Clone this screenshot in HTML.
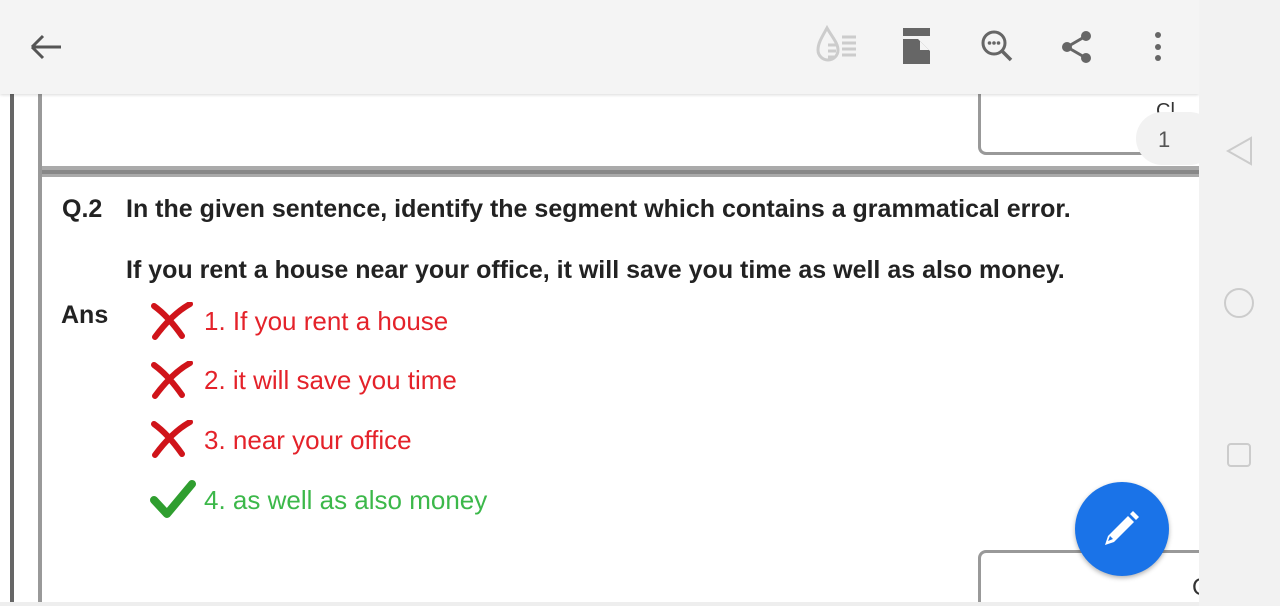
<!DOCTYPE html>
<html style="overflow:hidden"><head><style>
html,body{margin:0;width:1280px;height:606px;overflow:hidden}
body{background:#fff;font-family:"Liberation Sans",Arial,sans-serif;position:relative}
.abs{position:absolute}
.opt{position:absolute;left:204px;font-size:26px;line-height:26px}
.r{color:#e4222a}.g{color:#3cb84a}
.q{font-size:25px;font-weight:bold;color:#222;letter-spacing:0px}
</style></head><body>
<div class="abs" style="left:0;top:0;width:1199px;height:606px;overflow:hidden">
<div class="abs" style="left:10px;top:94px;width:4px;height:512px;background:#666"></div>
<div class="abs" style="left:38px;top:94px;width:4px;height:512px;background:#999"></div>
<div class="abs" style="left:42px;top:166px;width:1157px;height:4px;background:#aaa"></div>
<div class="abs" style="left:42px;top:170px;width:1157px;height:4px;background:#888"></div>
<div class="abs" style="left:42px;top:174px;width:1157px;height:3px;background:#aaa"></div>
<div class="abs" style="left:978px;top:80px;width:240px;height:72px;border-left:3px solid #999;border-bottom:3px solid #999;border-bottom-left-radius:8px"></div>
<div class="abs" style="left:1156px;top:100px;font-size:20px;color:#333">Cl</div>
<div class="abs" style="left:1136px;top:112px;width:80px;height:53px;border-radius:27px;background:#f2f2f2"></div>
<div class="abs" style="left:1158px;top:127px;font-size:22px;color:#555">1</div>
<div class="abs q" style="left:62px;top:195px">Q.2</div>
<div class="abs q" style="left:126px;top:195px">In the given sentence, identify the segment which contains a grammatical error.</div>
<div class="abs q" style="left:126px;top:256px">If you rent a house near your office, it will save you time as well as also money.</div>
<div class="abs q" style="left:61px;top:301px">Ans</div>
<svg class="abs" style="left:150px;top:302px" width="44" height="38" viewBox="0 0 44 38"><path d="M4 4Q18 14 32 34M40 2Q22 12 5 35" stroke="#d0141a" stroke-width="6" fill="none" stroke-linecap="round"/></svg>
<svg class="abs" style="left:150px;top:361px" width="44" height="38" viewBox="0 0 44 38"><path d="M4 4Q18 14 32 34M40 2Q22 12 5 35" stroke="#d0141a" stroke-width="6" fill="none" stroke-linecap="round"/></svg>
<svg class="abs" style="left:150px;top:420px" width="44" height="38" viewBox="0 0 44 38"><path d="M4 4Q18 14 32 34M40 2Q22 12 5 35" stroke="#d0141a" stroke-width="6" fill="none" stroke-linecap="round"/></svg>
<svg class="abs" style="left:150px;top:478px" width="46" height="42" viewBox="0 0 46 42"><path d="M4 22L17 36L42 6" stroke="#2f9e2f" stroke-width="8" fill="none" stroke-linecap="round" stroke-linejoin="round"/></svg>
<div class="opt r" style="top:308px">1. If you rent a house</div>
<div class="opt r" style="top:367px">2. it will save you time</div>
<div class="opt r" style="top:427px">3. near your office</div>
<div class="opt g" style="top:487px">4. as well as also money</div>
<div class="abs" style="left:978px;top:550px;width:240px;height:70px;border-left:3px solid #999;border-top:3px solid #999;border-top-left-radius:8px"></div>
<div class="abs" style="left:1192px;top:574px;font-size:24px;color:#333">C</div>
<div class="abs" style="left:0;top:602px;width:1199px;height:4px;background:#eee"></div>
<div class="abs" style="left:0;top:0;width:1199px;height:94px;background:#f4f4f4;box-shadow:0 1px 3px rgba(0,0,0,.15)"></div>
</div>
<div class="abs" style="left:1199px;top:0;width:81px;height:606px;background:#f2f2f2"></div>
<svg class="abs" style="left:28px;top:32px" width="36" height="30" viewBox="0 0 36 30"><path d="M4 15H33M4 15L15 4M4 15L15 26" stroke="#555" stroke-width="3" fill="none"/></svg>
<svg class="abs" style="left:814px;top:25px" width="46" height="42" viewBox="0 0 46 42"><path d="M13 3C8 12 4 18 4 25a10 10 0 0 0 20 0C24 18 18 12 13 3Z" fill="none" stroke="#ccc" stroke-width="3"/><g stroke="#ccc" stroke-width="3"><path d="M14 20h8M14 26h8M14 32h6M28 12h14M28 18h14M28 24h14M28 30h14"/></g></svg>
<svg class="abs" style="left:903px;top:28px" width="28" height="36" viewBox="0 0 28 36"><rect x="0" y="0" width="27" height="8" fill="#666"/><path d="M0 11H15L27 23V36H0Z" fill="#666"/><path d="M17 13V22H26" fill="#f4f4f4"/></svg>
<svg class="abs" style="left:980px;top:29px" width="34" height="34" viewBox="0 0 34 34"><circle cx="14" cy="14" r="11" fill="none" stroke="#666" stroke-width="3"/><path d="M22 22L31 31" stroke="#666" stroke-width="3.5"/><circle cx="9.5" cy="14" r="1.8" fill="#666"/><circle cx="14" cy="14" r="1.8" fill="#666"/><circle cx="18.5" cy="14" r="1.8" fill="#666"/></svg>
<svg class="abs" style="left:1060px;top:30px" width="34" height="34" viewBox="0 0 34 34"><path d="M7 17L26 6M7 17L26 28" stroke="#666" stroke-width="3"/><circle cx="7" cy="17" r="5" fill="#666"/><circle cx="26" cy="6" r="5" fill="#666"/><circle cx="26" cy="28" r="5" fill="#666"/></svg>
<svg class="abs" style="left:1150px;top:30px" width="16" height="34"><circle cx="8" cy="5" r="3" fill="#666"/><circle cx="8" cy="17" r="3" fill="#666"/><circle cx="8" cy="28" r="3" fill="#666"/></svg>
<svg class="abs" style="left:1224px;top:135px" width="32" height="34"><path d="M27 3L4 16L27 29Z" fill="none" stroke="#ccc" stroke-width="2"/></svg>
<svg class="abs" style="left:1222px;top:286px" width="34" height="34"><circle cx="17" cy="17" r="14" fill="none" stroke="#ccc" stroke-width="2"/></svg>
<svg class="abs" style="left:1226px;top:442px" width="28" height="28"><rect x="2" y="2" width="22" height="22" rx="3" fill="none" stroke="#ccc" stroke-width="2"/></svg>
<div class="abs" style="left:1075px;top:482px;width:94px;height:94px;border-radius:50%;background:#1a73e8;box-shadow:0 2px 5px rgba(0,0,0,.3)"></div>
<svg class="abs" style="left:1100px;top:508px" width="42" height="42" viewBox="0 0 42 42"><path d="M5 37L8 28L28 8L34 14L14 34Z" fill="#fff"/><path d="M30 6L33 3L39 9L36 12Z" fill="#fff"/><path d="M8 33L10 28L13 31Z" fill="#1a73e8"/></svg>
</body></html>
